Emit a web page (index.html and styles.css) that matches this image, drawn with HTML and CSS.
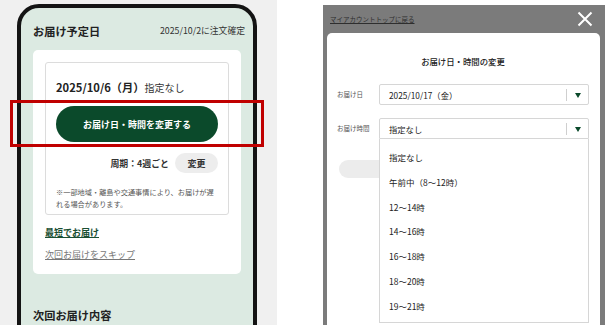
FILE: index.html
```html
<!DOCTYPE html>
<html lang="ja">
<head>
<meta charset="utf-8">
<title>お届け日・時間の変更</title>
<link rel="stylesheet" href="styles.css">
</head>
<body>
<div class="stage">
  <section class="left">
    <div class="phone">
      <div class="phone-head">
        <h2 class="title">お届け予定日</h2>
        <span class="confirm">2025/10/2に注文確定</span>
      </div>
      <div class="card">
        <div class="box">
          <p class="date"><b>2025/10/6（月）</b><span class="spec">指定なし</span></p>
          <a class="cta">お届け日・時間を変更する</a>
          <div class="cycle"><span>周期：4週ごと</span><span class="chg">変更</span></div>
          <p class="note">※一部地域・離島や交通事情により、お届けが遅れる場合があります。</p>
        </div>
        <a class="link-green">最短でお届け</a>
        <a class="link-grey">次回お届けをスキップ</a>
      </div>
      <h2 class="title next">次回お届け内容</h2>
    </div>
    <div class="highlight"></div>
  </section>
  <div class="gap"></div>
  <section class="right">
    <div class="topbar">
      <a class="back">マイアカウントトップに戻る</a>
      <svg class="close" width="16" height="16" viewBox="0 0 16 16"><path d="M1.5 1.5 L14.5 14.5 M14.5 1.5 L1.5 14.5" stroke="#fff" stroke-width="2" fill="none"/></svg>
    </div>
    <div class="modal">
      <h3 class="m-title">お届け日・時間の変更</h3>
      <div class="row">
        <span class="label">お届け日</span>
        <div class="select"><span>2025/10/17（金）</span><i class="sep"></i><i class="arrow"></i></div>
      </div>
      <div class="row row2">
        <span class="label">お届け時間</span>
        <div class="field">
          <div class="select open"><span>指定なし</span><i class="sep"></i><i class="arrow"></i></div>
          <ul class="options">
            <li>指定なし</li>
            <li>午前中（8〜12時）</li>
            <li>12〜14時</li>
            <li>14〜16時</li>
            <li>16〜18時</li>
            <li>18〜20時</li>
            <li>19〜21時</li>
          </ul>
        </div>
      </div>
      <div class="pill"></div>
    </div>
  </section>
</div>
</body>
</html>
```
FILE: styles.css
```css
* { box-sizing: border-box; margin: 0; padding: 0; }
html, body { width: 609px; height: 325px; overflow: hidden; background: #fff; }
body { font-family: "Noto Sans CJK JP", "Noto Sans", sans-serif; color: #222; }

.stage { display: flex; width: 609px; height: 325px; }

.left {
  position: relative;
  width: 277px;
  height: 325px;
  background: #f0f0f0;
  overflow: hidden;
  padding: 4px 0 0 17px;
}
.phone {
  width: 240px;
  height: 380px;
  border: 4px solid #141414;
  border-radius: 22px;
  background: #dceae2;
}
.phone-head {
  display: flex;
  justify-content: space-between;
  align-items: center;
  padding: 14px 8px 10px 12px;
}
.title { font-size: 11.2px; font-weight: 700; line-height: 18px; color: #222; }
.confirm { font-size: 8.8px; line-height: 18px; color: #333; }

.card {
  margin: 0 12px;
  background: #fff;
  border-radius: 5px;
  padding: 12px;
  display: flex;
  flex-direction: column;
  align-items: flex-start;
}
.box {
  width: 100%;
  border: 1px solid #dcdcdc;
  border-radius: 3px;
  padding: 15px 10px 4px 10px;
  display: flex;
  flex-direction: column;
}
.date { line-height: 18px; font-size: 11px; }
.date b { font-weight: 700; font-size: 11.2px; }
.date .spec { font-size: 10px; color: #333; }
.cta {
  margin-top: 9px;
  height: 36px;
  border-radius: 18px;
  background: #0b4a2b;
  color: #fff;
  font-size: 9px;
  font-weight: 700;
  display: flex;
  align-items: center;
  justify-content: center;
}
.cycle {
  margin-top: 11px;
  display: flex;
  justify-content: flex-end;
  align-items: center;
  gap: 6px;
  font-size: 8.9px;
  font-weight: 700;
  color: #333;
}
.chg {
  width: 43px;
  height: 20px;
  border-radius: 10px;
  background: #ededed;
  display: flex;
  align-items: center;
  justify-content: center;
  font-size: 9px;
  font-weight: 700;
}
.note {
  margin-top: 13px;
  font-size: 7.2px;
  line-height: 12px;
  color: #555;
}
.link-green {
  margin-top: 11px;
  font-size: 9px;
  line-height: 14px;
  font-weight: 700;
  color: #1a4f33;
  text-decoration: underline;
}
.link-grey {
  margin-top: 8px;
  font-size: 9px;
  line-height: 14px;
  color: #777;
  text-decoration: underline;
}
.next { margin: 32px 0 0 12px; }

.highlight {
  position: absolute;
  left: 10px;
  top: 100px;
  width: 254px;
  height: 47px;
  border: 3px solid #c00000;
}

.gap { width: 46px; }

.right {
  position: relative;
  width: 282px;
  height: 320px;
  margin-top: 5px;
  background: #7b7b7b;
  overflow: hidden;
}
.topbar {
  height: 28px;
  display: flex;
  align-items: center;
  justify-content: space-between;
  padding: 0 12px 0 7px;
}
.back { font-size: 6.5px; color: #2e2e2e; text-decoration: underline; }
.close { display: block; }

.modal {
  position: relative;
  margin-left: 4px;
  width: 273px;
  height: 300px;
  background: #fff;
  border-radius: 5px 5px 0 0;
  padding: 22px 11px 0 10px;
}
.m-title {
  text-align: center;
  font-size: 8.4px;
  line-height: 12px;
  font-weight: 500;
  color: #222;
  margin-bottom: 17px;
}
.row { display: flex; align-items: flex-start; }
.row2 { margin-top: 13px; }
.label {
  width: 42px;
  font-size: 6.5px;
  line-height: 21px;
  color: #555;
}
.field { position: relative; z-index: 2; width: 210px; }
.select {
  position: relative;
  width: 210px;
  height: 21px;
  border: 1px solid #d6d6d6;
  border-radius: 2px;
  display: flex;
  align-items: center;
  padding-left: 9px;
  font-size: 8.3px;
  color: #222;
  background: #fff;
}
.select.open { border-radius: 2px 2px 0 0; }
.sep {
  position: absolute;
  left: 186px;
  top: 4px;
  width: 1px;
  height: 12px;
  background: #cfcfcf;
}
.arrow {
  position: absolute;
  left: 195px;
  top: 8px;
  width: 0;
  height: 0;
  border-left: 3.5px solid transparent;
  border-right: 3.5px solid transparent;
  border-top: 5px solid #0b4a2b;
}
.options {
  list-style: none;
  width: 210px;
  background: #fff;
  border: 1px solid #d6d6d6;
  border-top: none;
  padding: 6px 0 3px;
}
.options li {
  height: 24.8px;
  line-height: 24.8px;
  padding-left: 9px;
  font-size: 8.5px;
  color: #222;
}
.pill {
  position: absolute;
  left: 12px;
  top: 127px;
  width: 130px;
  height: 18px;
  border-radius: 9px;
  background: #ececec;
  z-index: 1;
}
```
